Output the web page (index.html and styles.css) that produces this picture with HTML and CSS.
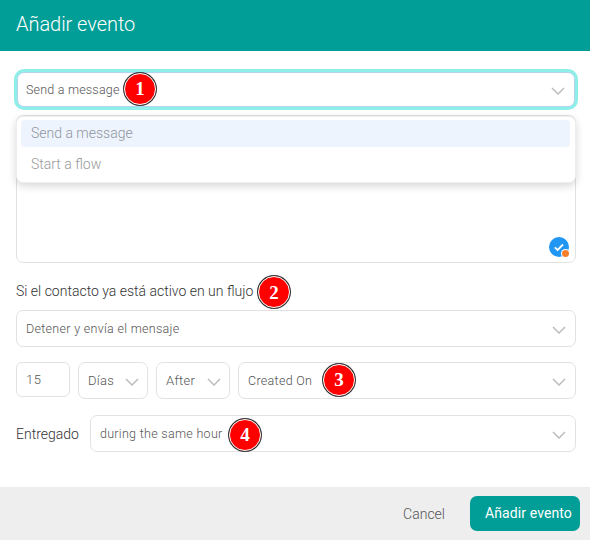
FILE: index.html
```html
<!DOCTYPE html>
<html lang="es">
<head>
<meta charset="utf-8">
<title>Añadir evento</title>
<link rel="stylesheet" href="styles.css">
</head>
<body>
<div class="modal">
  <header class="header">Añadir evento</header>
  <main class="content">
    <div class="stack-top">
      <div class="select focused">
        <span class="value">Send a message</span>
        <svg class="chev" viewBox="0 0 14 8"><path d="M1 1l6 6 6-6"/></svg>
        <span class="badge b1">1</span>
      </div>
      <div class="editor">
        <span class="check">
          <svg viewBox="0 0 20 20" class="check-svg"><circle cx="10" cy="10" r="10" fill="#2196f3"/><path d="M5.8 10.4l2.8 2.5 5.4-5.4" fill="none" stroke="#fff" stroke-width="1.8"/></svg>
          <span class="dot"></span>
        </span>
      </div>
      <div class="menu">
        <div class="option active">Send a message</div>
        <div class="option">Start a flow</div>
      </div>
    </div>
    <div class="label-row">Si el contacto ya está activo en un flujo<span class="badge b2">2</span></div>
    <div class="select">
      <span class="value">Detener y envía el mensaje</span>
      <svg class="chev" viewBox="0 0 14 8"><path d="M1 1l6 6 6-6"/></svg>
    </div>
    <div class="row">
      <div class="input">15</div>
      <div class="select mini days"><span class="value">Días</span><svg class="chev" viewBox="0 0 14 8"><path d="M1 1l6 6 6-6"/></svg></div>
      <div class="select mini after"><span class="value">After</span><svg class="chev" viewBox="0 0 14 8"><path d="M1 1l6 6 6-6"/></svg></div>
      <div class="select grow"><span class="value">Created On</span><svg class="chev" viewBox="0 0 14 8"><path d="M1 1l6 6 6-6"/></svg><span class="badge b3">3</span></div>
    </div>
    <div class="row delivered">
      <span class="row-label">Entregado</span>
      <div class="select grow"><span class="value">during the same hour</span><svg class="chev" viewBox="0 0 14 8"><path d="M1 1l6 6 6-6"/></svg><span class="badge b4">4</span></div>
    </div>
  </main>
  <footer class="footer">
    <span class="cancel">Cancel</span>
    <span class="primary">Añadir evento</span>
  </footer>
</div>
</body>
</html>
```
FILE: styles.css
```css
* { box-sizing: border-box; }
html, body { margin: 0; padding: 0; background: #fff; }
body { font-family: Roboto, "Liberation Sans", sans-serif; color: #666; width: 590px; height: 540px; overflow: hidden; }
.modal { display: flex; flex-direction: column; width: 590px; height: 540px; }
.header { height: 51px; flex: none; background: #009e96; color: #fff; font-size: 20px; font-weight: 300; line-height: 48px; padding-left: 16px; letter-spacing: -.05px; }
.content { flex: 1; padding: 20px 14px 0 16px; display: flex; flex-direction: column; }
.stack-top { position: relative; display: flex; flex-direction: column; }
.select { position: relative; display: flex; align-items: center; justify-content: space-between; height: 37px; border: 1px solid #e2e2e2; border-radius: 7px; background: #fff; padding: 0 9px 0 9px; font-size: 12.5px; font-weight: 300; letter-spacing: .3px; }
.select.focused { height: 35px; box-shadow: 0 0 0 3px #8eeee8; border-color: #b5d3f0; margin: 1px 0 0 1px; width: 558px; padding-left: 8px; letter-spacing: .2px; }
.value { color: #555; }
.chev { width: 14px; height: 8px; flex: none; margin-top: 2px; }
.chev path { fill: none; stroke: #bdbdbd; stroke-width: 1.5; }
.editor { position: relative; height: 148px; margin-top: 8px; border: 1px solid #e2e2e2; border-radius: 7px; background: #fff; }
.check { position: absolute; right: 6px; bottom: 5px; width: 20px; height: 20px; }
.check-svg { display: block; width: 20px; height: 20px; }
.dot { position: absolute; right: 0; bottom: 0; width: 7px; height: 7px; border-radius: 50%; background: #f97f2b; box-shadow: 0 0 0 1px #fff; }
.menu { position: absolute; left: 0; top: 45px; width: 560px; height: 67px; border: 1px solid #eee; border-radius: 7px; background: #fff; box-shadow: 0 3px 8px rgba(0,0,0,.16); padding: 3px 5px 0 4px; font-size: 14px; font-weight: 300; }
.option { height: 27px; line-height: 27px; padding-left: 10px; color: #999; margin-bottom: 4px; }
.option.active { background: #eef4fd; border-radius: 4px; color: #8f949d; }
.label-row { position: relative; z-index: 1; margin-top: 18px; height: 29px; font-size: 14px; font-weight: 300; line-height: 21px; color: #333; }
.row { display: flex; align-items: center; gap: 8px; margin-top: 15px; }
.input { width: 54px; height: 35px; border: 1px solid #e2e2e2; border-radius: 6px; padding-left: 9px; line-height: 33px; font-size: 13px; font-weight: 300; letter-spacing: .6px; color: #555; flex: none; margin-bottom: 2px; }
.mini { flex: none; font-size: 13px; padding-right: 8px; }
.days { width: 70px; }
.after { width: 74px; }
.grow { flex: 1; }
.delivered { margin-top: 16px; gap: 11px; }
.row-label { font-size: 14px; font-weight: 300; color: #333; }
.footer { height: 53px; flex: none; background: #eee; display: flex; align-items: center; justify-content: flex-end; padding-right: 10px; }
.cancel { font-size: 14px; font-weight: 300; color: #555; margin-right: 25px; }
.primary { display: block; width: 110px; height: 35px; background: #009e96; border-radius: 7px; color: #fff; font-size: 14px; padding-left: 15px; line-height: 34px; letter-spacing: .1px; }
.badge { position: absolute; display: flex; align-items: center; justify-content: center; width: 32px; height: 32px; border-radius: 50%; background: #f00; border: 1.5px solid #fff; box-shadow: 0 0 0 1px #333; color: #fff; font-family: "Liberation Serif", serif; font-weight: 700; font-size: 19px; letter-spacing: 0; }
.b1 { left: 106px; top: 0; }
.b2 { left: 242px; top: -5px; }
.b3 { left: 84px; top: 1px; }
.b4 { left: 138px; top: 3px; }
```
